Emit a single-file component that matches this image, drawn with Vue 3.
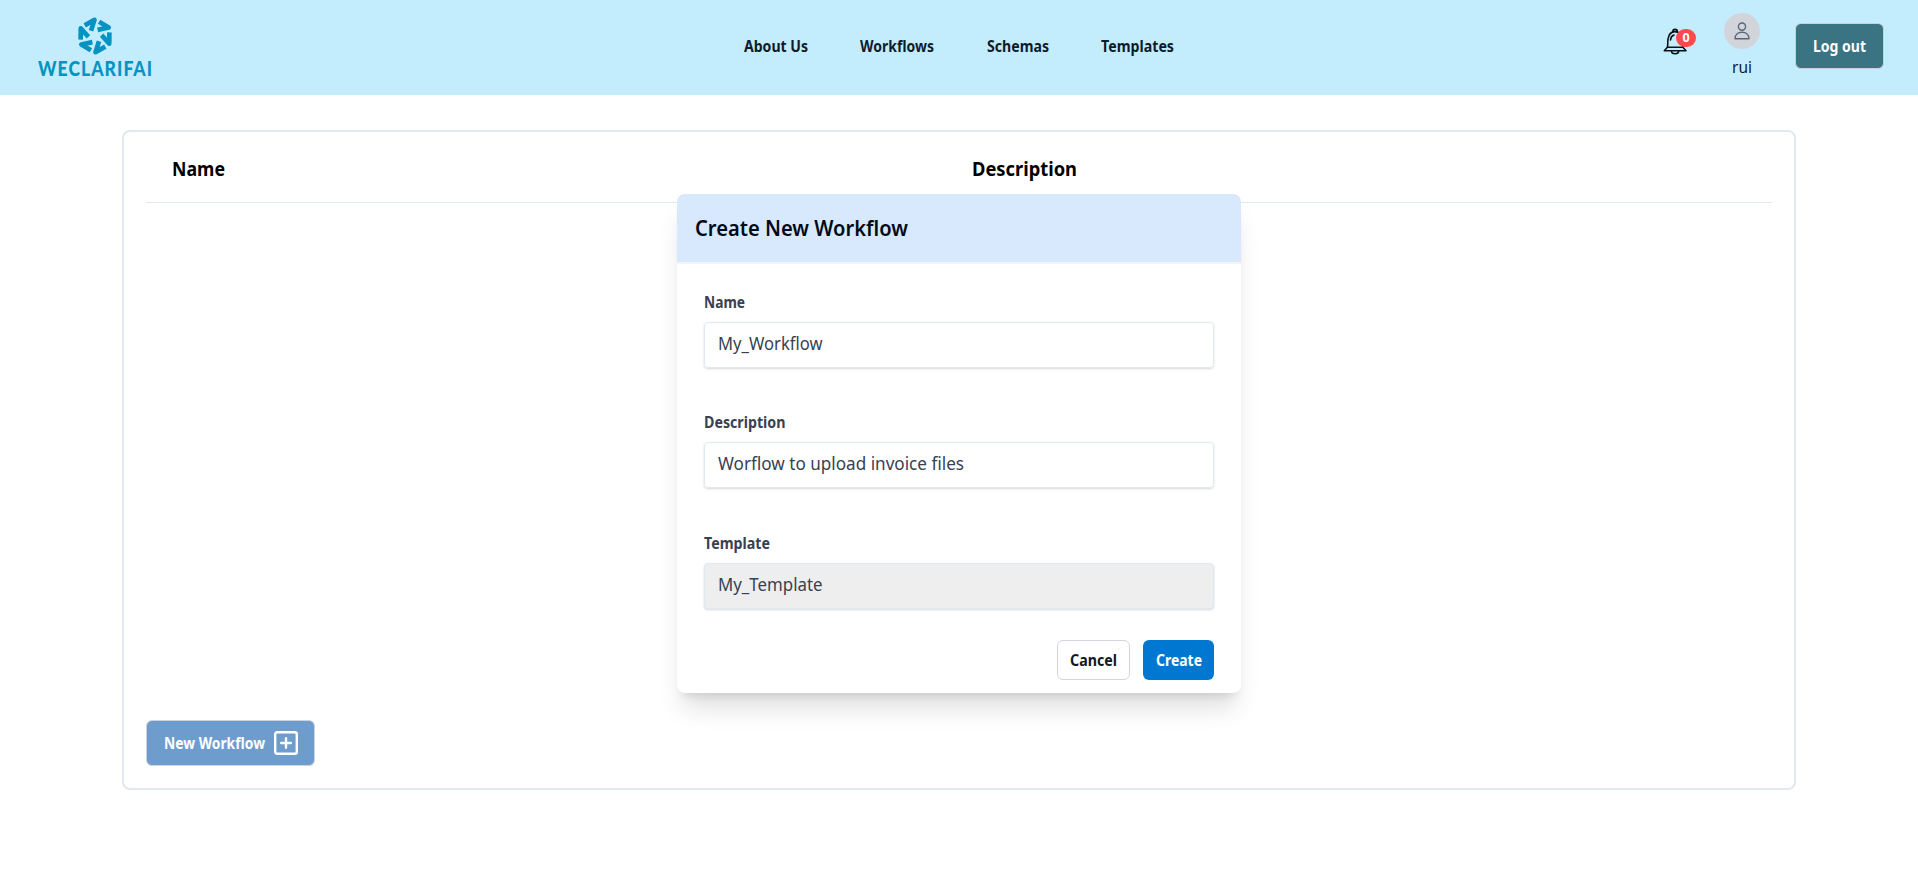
<script setup>
const nav = [
  { label: 'About Us', width: 64 },
  { label: 'Workflows', width: 74 },
  { label: 'Schemas', width: 62 },
  { label: 'Templates', width: 73 },
]
const fields = [
  { label: 'Name', labelWidth: 41, value: 'My_Workflow', width: 104.5, disabled: false },
  { label: 'Description', labelWidth: 81.5, value: 'Worflow to upload invoice files', width: 246, disabled: false },
  { label: 'Template', labelWidth: 66, value: 'My_Template', width: 104.5, disabled: true },
]
const arms = [0, 60, 120, 180, 240, 300]

// Condenses a label horizontally so that it occupies the given width.
const vFit = {
  mounted(el, { value }) {
    const natural = el.getBoundingClientRect().width
    el.style.transform = `scaleX(${value / natural})`
    el.style.marginRight = `${value - natural}px`
  },
}
</script>

<template>
  <div class="page">
    <header class="topbar">
      <div class="logo">
        <svg width="40" height="40" viewBox="-20 -20 40 40">
          <g fill="none" stroke="#0693c4" stroke-width="4.700" stroke-linejoin="round">
            <path
              v-for="a in arms"
              :key="a"
              :transform="`rotate(${a})`"
              d="M14.400 -3.600 L14.200 7.600 L6.600 -.800"
            />
          </g>
        </svg>
        <div class="wordmark"><span v-fit="115" class="fit">WECLARIFAI</span></div>
      </div>
      <nav class="nav">
        <a v-for="n in nav" :key="n.label"><span v-fit="n.width" class="fit">{{ n.label }}</span></a>
      </nav>
      <div class="account">
        <div class="bell">
          <svg width="26" height="28" viewBox="0 0 26 28" fill="none" stroke="#0b1116" stroke-width="1.6" stroke-linejoin="round" stroke-linecap="round">
            <path d="M4.4 19.2C5 17 4.6 14 5 11 5.7 6.5 8.500 3.600 12 3.600S18.600 6.500 19 11c.4 3 0 6 .9 8.200L23 22.700H1.300Z" />
            <path d="M4.600 19.200H20M8.500 23a3.600 2.700 0 0 0 7.200 0M9.800 3.700a2.300 2.300 0 0 1 4.600 0M7.500 12c.2-2.500 1.500-4.300 3.500-5" />
          </svg>
          <span class="badge">0</span>
        </div>
        <div class="user">
          <div class="avatar">
            <svg width="16" height="18" viewBox="0 0 16 18" fill="none" stroke="#596675" stroke-width="1.4" stroke-linejoin="round">
              <circle cx="8" cy="4.600" r="3.600" />
              <path d="M1 16.800c0-4 2.800-6.600 7-6.600s7 2.600 7 6.600Z" />
            </svg>
          </div>
          <div class="uname"><span v-fit="20" class="fit">rui</span></div>
        </div>
        <button class="logout"><span v-fit="53" class="fit">Log out</span></button>
      </div>
    </header>

    <main class="panel">
      <div class="thead">
        <div><span v-fit="53" class="fit">Name</span></div>
        <div><span v-fit="105" class="fit">Description</span></div>
      </div>
      <button class="new">
        <span v-fit="101" class="fit">New Workflow</span>
        <svg width="24" height="24" viewBox="0 0 24 24" fill="none" stroke="#fff" stroke-width="2.4" stroke-linecap="round">
          <rect x="1.200" y="1.200" width="21.600" height="21.600" rx="2" />
          <path d="M12 7.200v9.600M7.200 12h9.600" />
        </svg>
      </button>
    </main>

    <section class="dialog">
      <h2><span v-fit="213" class="fit">Create New Workflow</span></h2>
      <form class="body" @submit.prevent>
        <div v-for="f in fields" :key="f.label" class="field">
          <label><span v-fit="f.labelWidth" class="fit">{{ f.label }}</span></label>
          <div class="input" :class="{ disabled: f.disabled }">
            <span v-fit="f.width" class="fit">{{ f.value }}</span>
          </div>
        </div>
        <div class="actions">
          <button class="cancel"><span v-fit="47" class="fit">Cancel</span></button>
          <button class="create"><span v-fit="46" class="fit">Create</span></button>
        </div>
      </form>
    </section>
  </div>
</template>

<style>
body {
  background: #fff;
}
</style>

<style scoped>
* {
  box-sizing: border-box;
}
.page {
  position: relative;
  width: 100%;
  height: 887px;
  overflow: hidden;
  font-family: 'Noto Sans', 'Open Sans', sans-serif;
  font-size: 15.5px;
  color: #0f1b2b;
  white-space: nowrap;
}
.fit {
  display: inline-block;
  flex: none;
  transform-origin: 0 50%;
}
.topbar {
  height: 95px;
  background: #c3edfd;
  display: grid;
  grid-template-columns: 1fr auto 1fr;
  align-items: center;
  padding: 0 34px 4px;
}
.logo {
  display: flex;
  flex-direction: column;
  align-items: center;
  width: 122px;
  padding-top: 4px;
}
.logo svg {
  display: block;
}
.wordmark {
  font-family: Lato, sans-serif;
  font-weight: 900;
  font-size: 20.5px;
  line-height: 24px;
  letter-spacing: 1.2px;
  color: #0693c4;
}
.nav {
  display: flex;
  gap: 52.5px;
  font-weight: 700;
}
.account {
  display: flex;
  justify-content: flex-end;
}
button {
  font: inherit;
  font-weight: 700;
  display: flex;
  align-items: center;
  justify-content: center;
  border-radius: 6px;
  padding: 0;
}
.bell {
  position: relative;
  width: 26px;
  height: 28px;
  margin: 15px 35px 0 0;
}
.badge {
  position: absolute;
  left: 13px;
  top: 1px;
  width: 20px;
  height: 18px;
  border-radius: 9px;
  background: #ff4a4d;
  color: #fff;
  font-size: 12.5px;
  font-weight: 700;
  line-height: 17px;
  text-align: center;
}
.user {
  display: flex;
  flex-direction: column;
  align-items: center;
  margin-right: 35px;
}
.avatar {
  width: 36px;
  height: 36px;
  border-radius: 50%;
  background: #d1d5db;
  display: flex;
  align-items: center;
  justify-content: center;
}
.uname {
  font-size: 16.5px;
  line-height: 24px;
  margin-top: 6px;
}
.logout {
  width: 89px;
  height: 46px;
  margin-top: 10px;
  background: #3a7482;
  border: 1px solid #cbd0d6;
  color: #fff;
}
.panel {
  margin: 35px 122px 0;
  height: 660px;
  border: 2px solid #e2e8f0;
  border-radius: 8px;
  padding: 0 22px 22px;
  display: flex;
  flex-direction: column;
  justify-content: space-between;
}
.thead {
  height: 71px;
  border-bottom: 1px solid #e2e8f0;
  display: grid;
  grid-template-columns: 800px 1fr;
  padding: 21px 0 0 26px;
  font-size: 19.5px;
  font-weight: 700;
  line-height: 32px;
  color: #000;
}
.new {
  width: 169px;
  height: 46px;
  gap: 9px;
  background: #6e9ccd;
  border: 1px solid #cbd5e1;
  color: #fff;
}
.dialog {
  position: absolute;
  left: 677px;
  top: 194px;
  width: 564px;
  height: 499px;
  border-radius: 8px;
  background: #fff;
  overflow: hidden;
  box-shadow: 0 20px 25px -5px rgba(0, 0, 0, 0.12), 0 8px 10px -6px rgba(0, 0, 0, 0.12);
}
.dialog h2 {
  margin: 0;
  height: 70px;
  padding-left: 17.5px;
  background: #d8e9fe;
  border-bottom: 2px solid #f3f4f6;
  font-size: 21.5px;
  font-weight: 600;
  line-height: 67px;
  color: #020b17;
}
.body {
  padding: 25px 27px 0;
}
.field {
  height: 121px;
}
.field:first-child {
  height: 120px;
}
.field label {
  display: block;
  font-weight: 700;
  color: #374151;
  line-height: 26px;
  height: 24px;
  margin-bottom: 9px;
}
.input {
  height: 46px;
  border: 1px solid #e2e8f0;
  border-radius: 4px;
  padding-left: 13px;
  line-height: 41px;
  font-size: 17.3px;
  color: #374151;
  box-shadow: 0 1px 3px rgba(0, 0, 0, 0.1), 0 1px 2px rgba(0, 0, 0, 0.06);
}
.input.disabled {
  background: #eee;
}
.actions {
  display: flex;
  justify-content: flex-end;
  gap: 13px;
  margin-top: -11px;
}
.cancel {
  width: 73px;
  height: 40px;
  background: #fff;
  border: 1px solid #d1d5db;
  color: #111827;
}
.create {
  width: 71px;
  height: 40px;
  background: #0078d1;
  border: 0;
  color: #fff;
}
</style>
